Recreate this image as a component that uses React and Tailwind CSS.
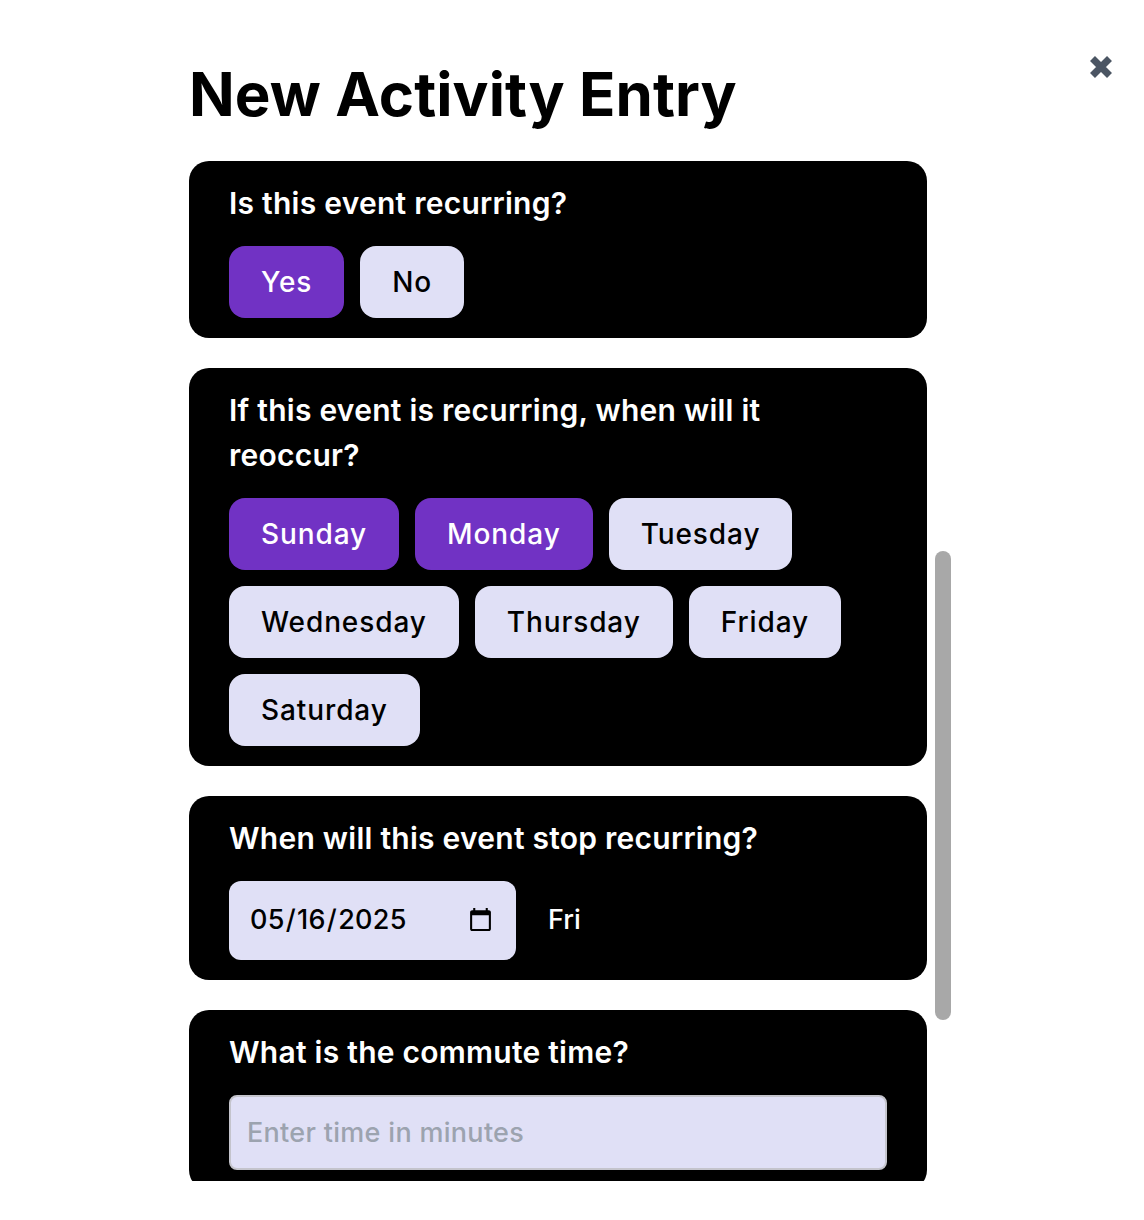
import React, { useState } from 'react';

const days = ['Sunday', 'Monday', 'Tuesday', 'Wednesday', 'Thursday', 'Friday', 'Saturday'];

const Choice = ({ label, active, onClick }) => (
  <button
    onClick={onClick}
    className={`h-[72px] px-8 rounded-2xl text-[28px] font-medium tracking-[0.9px] ${active ? 'bg-[#7132c4] text-white' : 'bg-[#e0e0f6] text-black'}`}
  >
    {label}
  </button>
);

const Card = ({ title, children }) => (
  <div className="bg-black rounded-[20px] px-10 py-5">
    <h2 className="text-white text-[30px] font-semibold tracking-[0.25px] leading-[45px] mb-5">{title}</h2>
    {children}
  </div>
);

const App = () => {
  const [recurring, setRecurring] = useState(true);
  const [selectedDays, setSelectedDays] = useState(['Sunday', 'Monday']);

  const toggleDay = (day) => {
    setSelectedDays(selectedDays.includes(day) ? selectedDays.filter((d) => d !== day) : [...selectedDays, day]);
  };

  return (
    <div className="relative h-[1220px] bg-white font-['Inter',sans-serif]">
      <button className="absolute left-[1089px] top-[55px] text-[#4b5563]">
        <svg viewBox="0 0 24 24" className="w-6 h-6 block" fill="none" stroke="currentColor" strokeWidth="7">
          <path d="M3.5 3.5L20.5 20.5M20.5 3.5L3.5 20.5" />
        </svg>
      </button>
      <div className="absolute left-[935px] top-[551px] w-4 h-[469px] rounded-lg bg-[#a8a8a8]" />

      <div className="h-[1181px] overflow-hidden ml-[189px] w-[738px] pt-[57px]">
        <h1 className="text-[60px] font-bold tracking-[0.1px] leading-[74px] mb-[30px] text-black">New Activity Entry</h1>

        <div className="flex flex-col gap-[30px]">
          <Card title="Is this event recurring?">
            <div className="flex gap-4">
              <Choice label="Yes" active={recurring} onClick={() => setRecurring(true)} />
              <Choice label="No" active={!recurring} onClick={() => setRecurring(false)} />
            </div>
          </Card>

          <Card title="If this event is recurring, when will it reoccur?">
            <div className="flex flex-wrap gap-4">
              {days.map((day) => (
                <Choice key={day} label={day} active={selectedDays.includes(day)} onClick={() => toggleDay(day)} />
              ))}
            </div>
          </Card>

          <Card title="When will this event stop recurring?">
            <div className="flex items-center gap-8">
              <input
                type="date"
                defaultValue="2025-05-16"
                className="w-[287px] h-[79px] px-5 rounded-xl bg-[#e0e0f6] text-black text-[27px] font-medium tracking-[0.3px]"
              />
              <span className="text-white text-[27px] font-medium">Fri</span>
            </div>
          </Card>

          <Card title="What is the commute time?">
            <input
              type="text"
              placeholder="Enter time in minutes"
              className="w-full h-[75px] px-4 rounded-lg bg-[#e0e0f6] border-2 border-[#c4c4cc] text-[27px] font-medium tracking-[0.3px] placeholder:text-[#9ca3af]"
            />
          </Card>
        </div>
      </div>
    </div>
  );
};

export default App;
